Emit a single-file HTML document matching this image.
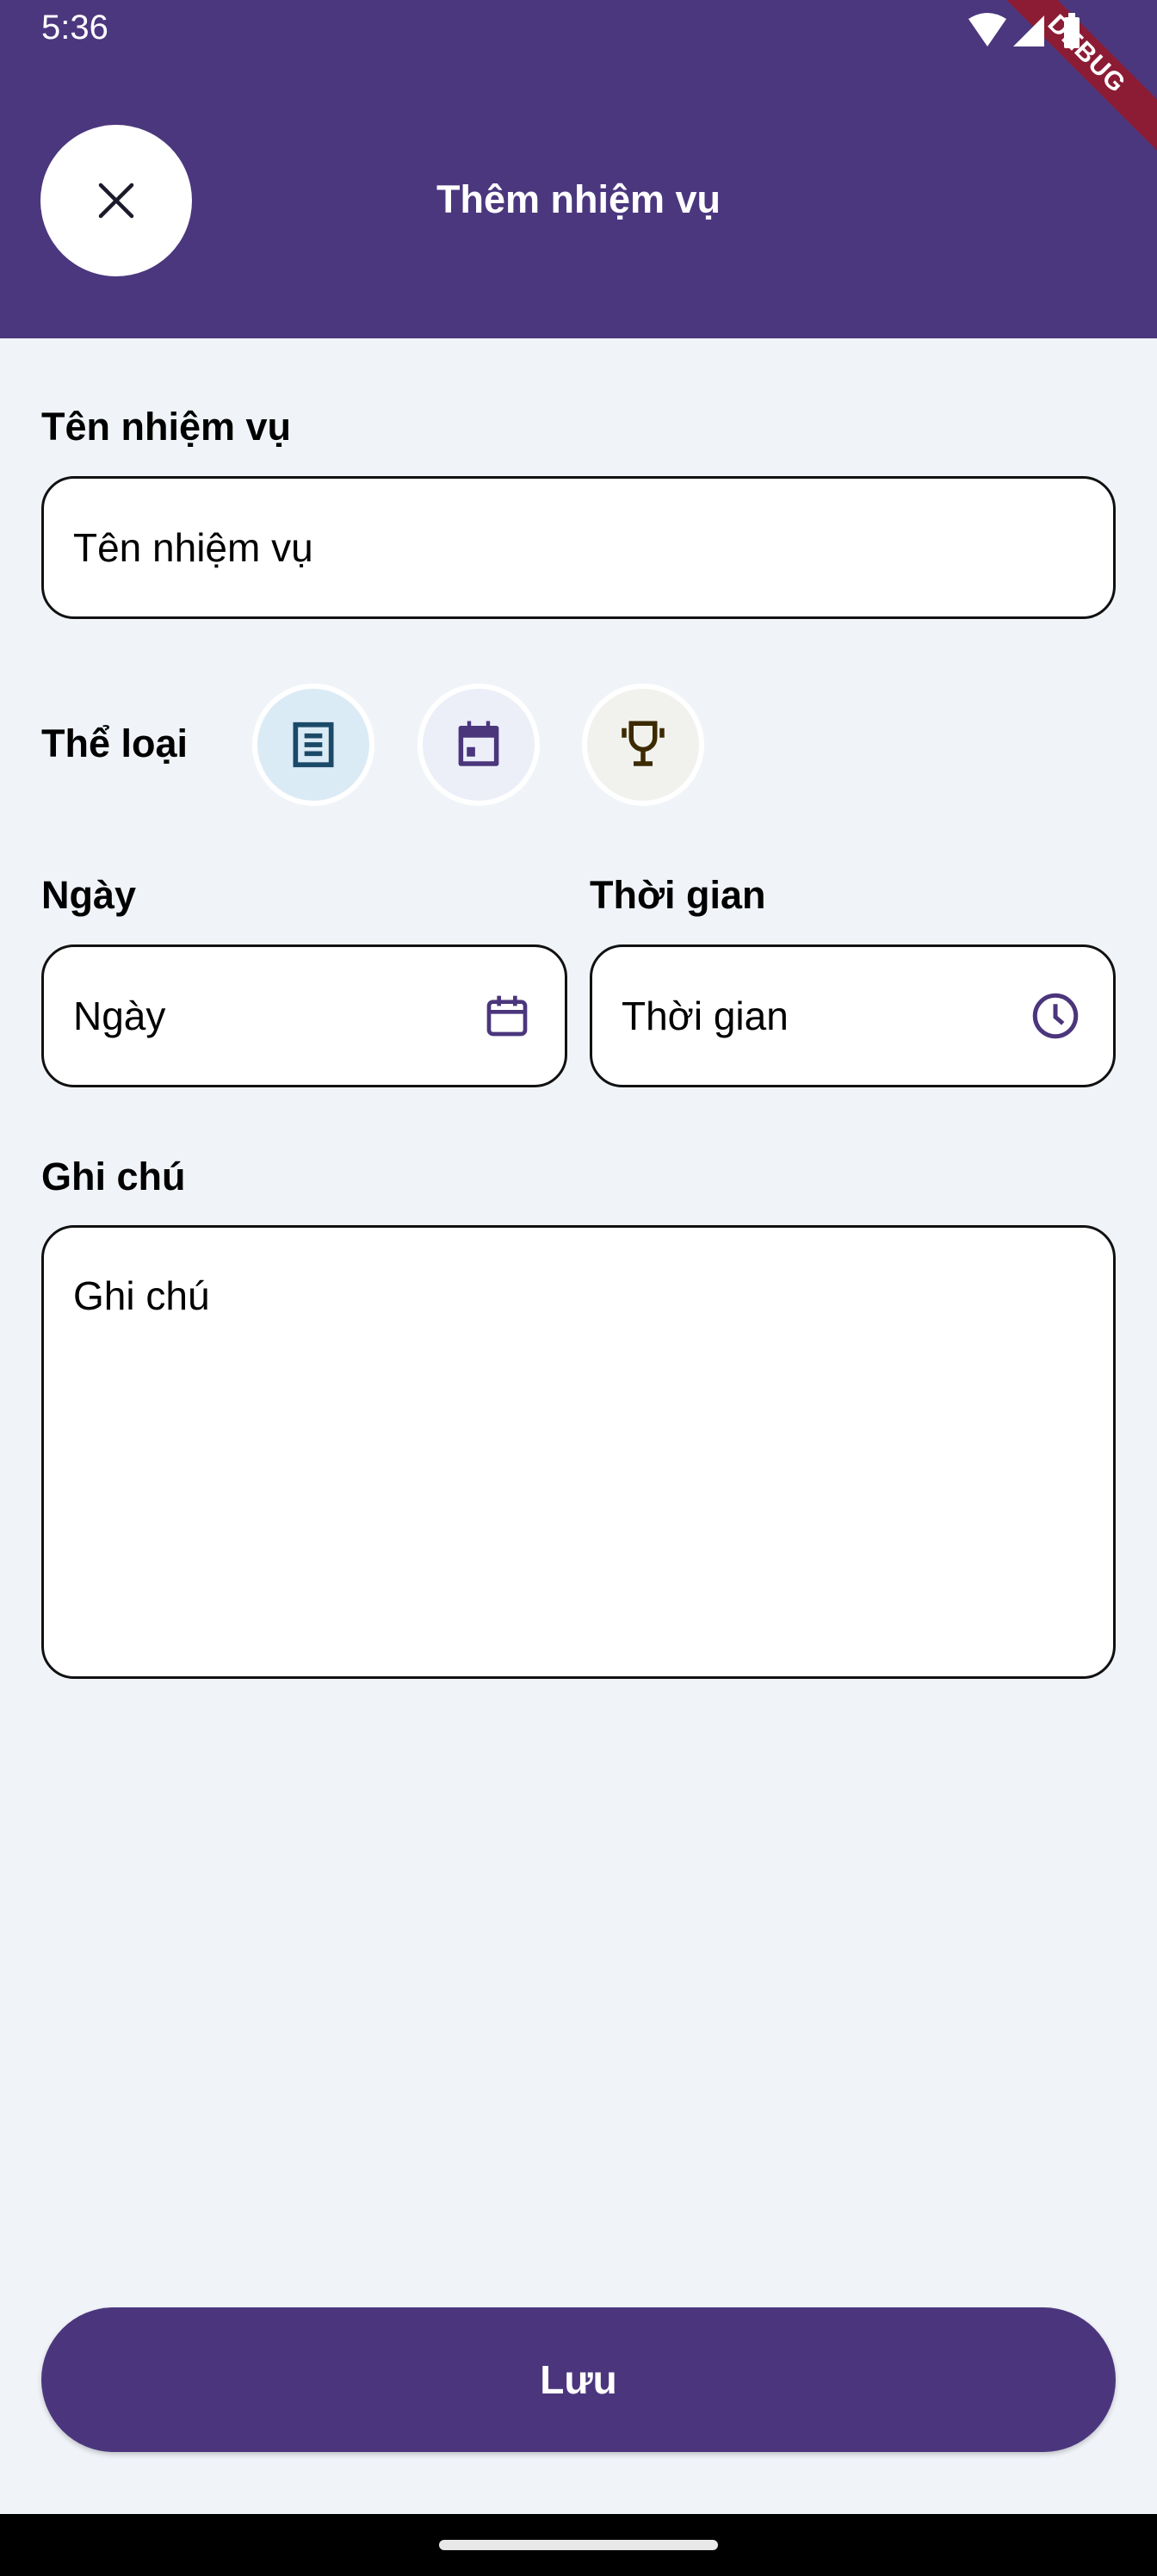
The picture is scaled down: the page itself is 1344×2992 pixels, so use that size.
<!DOCTYPE html>
<html><head><meta charset="utf-8"><style>
*{margin:0;padding:0;box-sizing:border-box}
body{width:1344px;height:2992px;background:#f0f4f9;font-family:"Liberation Sans",Roboto,sans-serif;position:relative;overflow:hidden;color:#000}
.abs{position:absolute}
.hdr{left:0;top:0;width:1344px;height:393px;background:#4b377e}
.lbl{font-weight:bold;font-size:45px;left:48px}
.inp{background:#fff;border:3px solid #111;border-radius:38px}
.ph{font-size:46px;position:absolute;left:34px;top:50%;transform:translateY(-50%)}
.cat{width:142px;height:142px;border-radius:50%;border:6px solid #fff;top:794px;display:flex;align-items:center;justify-content:center}
</style></head><body>
<div class="abs hdr"></div>
<div class="abs" style="left:48px;top:10px;color:#fff;font-size:40px">5:36</div>
<div class="abs" style="left:1092px;top:42px;width:340px;height:42px;background:#8b1c34;transform:rotate(45deg);color:#fff;font-weight:bold;font-size:30px;text-align:center;line-height:42px;letter-spacing:1px">DEBUG</div>
<svg class="abs" style="left:1125px;top:14px" width="110" height="44" viewBox="0 0 110 44">
<path d="M0 8 Q22 -6 44 8 L22 40 Z" fill="#fff"/>
<path d="M52 40 L88 4 L88 40 Z" fill="#fff"/>
</svg>
<svg class="abs" style="left:1232px;top:14px" width="26" height="44"><rect x="4" y="6" width="18" height="36" rx="2" fill="#fff"/><rect x="9" y="1" width="8" height="6" fill="#fff"/></svg>
<div class="abs" style="left:47px;top:145px;width:176px;height:176px;border-radius:50%;background:#fff"></div>
<svg class="abs" style="left:111px;top:209px" width="48" height="48" viewBox="0 0 48 48"><path d="M6 6 L42 42 M42 6 L6 42" stroke="#1a1a2a" stroke-width="4.5" stroke-linecap="round"/></svg>
<div class="abs" style="left:0;width:1344px;top:206px;text-align:center;color:#fff;font-weight:bold;font-size:45px">Thêm nhiệm vụ</div>

<div class="abs lbl" style="top:470px">Tên nhiệm vụ</div>
<div class="abs inp" style="left:48px;top:553px;width:1248px;height:166px"><span class="ph">Tên nhiệm vụ</span></div>

<div class="abs lbl" style="top:838px">Thể loại</div>
<div class="abs cat" style="left:293px;background:#dbebf6">
<svg width="62" height="62" viewBox="0 0 24 24"><path d="M4 3h16v18H4z" fill="none" stroke="#1b4a68" stroke-width="2.2"/><path d="M8 8h8M8 12h8M8 16h8" stroke="#1b4a68" stroke-width="2.2"/></svg></div>
<div class="abs cat" style="left:485px;background:#eceff8">
<svg width="66" height="66" viewBox="0 0 24 24"><path d="M8 2v3M16 2v3" stroke="#4b367c" stroke-width="1.6"/><rect x="3.5" y="4" width="17" height="17" rx="1" fill="#4b367c"/><rect x="5.5" y="9" width="13" height="10" fill="#eceff8"/><rect x="7" y="13" width="3.5" height="4" fill="#4b367c"/></svg></div>
<div class="abs cat" style="left:676px;background:#f1f2ee">
<svg width="66" height="66" viewBox="0 0 24 24"><path d="M7 3h10v6a5 5 0 0 1-10 0z" fill="none" stroke="#3c2a00" stroke-width="2"/><path d="M4 5v4M20 5v4M12 14v5M8 20h8" stroke="#3c2a00" stroke-width="2"/></svg></div>

<div class="abs lbl" style="top:1014px">Ngày</div>
<div class="abs lbl" style="top:1014px;left:685px">Thời gian</div>
<div class="abs inp" style="left:48px;top:1097px;width:611px;height:166px"><span class="ph">Ngày</span>
<svg class="abs" style="left:510px;top:52px" width="56" height="56" viewBox="0 0 24 24"><rect x="3" y="5" width="18" height="16" rx="2" fill="none" stroke="#4b367c" stroke-width="2"/><path d="M3 10h18M8 2v5M16 2v5" stroke="#4b367c" stroke-width="2"/></svg></div>
<div class="abs inp" style="left:685px;top:1097px;width:611px;height:166px"><span class="ph">Thời gian</span>
<svg class="abs" style="left:508px;top:50px" width="60" height="60" viewBox="0 0 24 24"><circle cx="12" cy="12" r="9.5" fill="none" stroke="#4b367c" stroke-width="2"/><path d="M12 6.5v6l3.5 3" fill="none" stroke="#4b367c" stroke-width="2"/></svg></div>

<div class="abs lbl" style="top:1341px">Ghi chú</div>
<div class="abs inp" style="left:48px;top:1423px;width:1248px;height:527px"><span style="position:absolute;left:34px;top:52px;font-size:46px">Ghi chú</span></div>

<div class="abs" style="left:48px;top:2680px;width:1248px;height:168px;border-radius:84px;background:#4b367e;box-shadow:0 3px 6px rgba(0,0,0,0.2);color:#fff;font-weight:bold;font-size:46px;text-align:center;line-height:168px">Lưu</div>

<div class="abs" style="left:0;top:2920px;width:1344px;height:72px;background:#000"></div>
<div class="abs" style="left:510px;top:2950px;width:324px;height:12px;border-radius:6px;background:#e8e8e8"></div>
</body></html>
